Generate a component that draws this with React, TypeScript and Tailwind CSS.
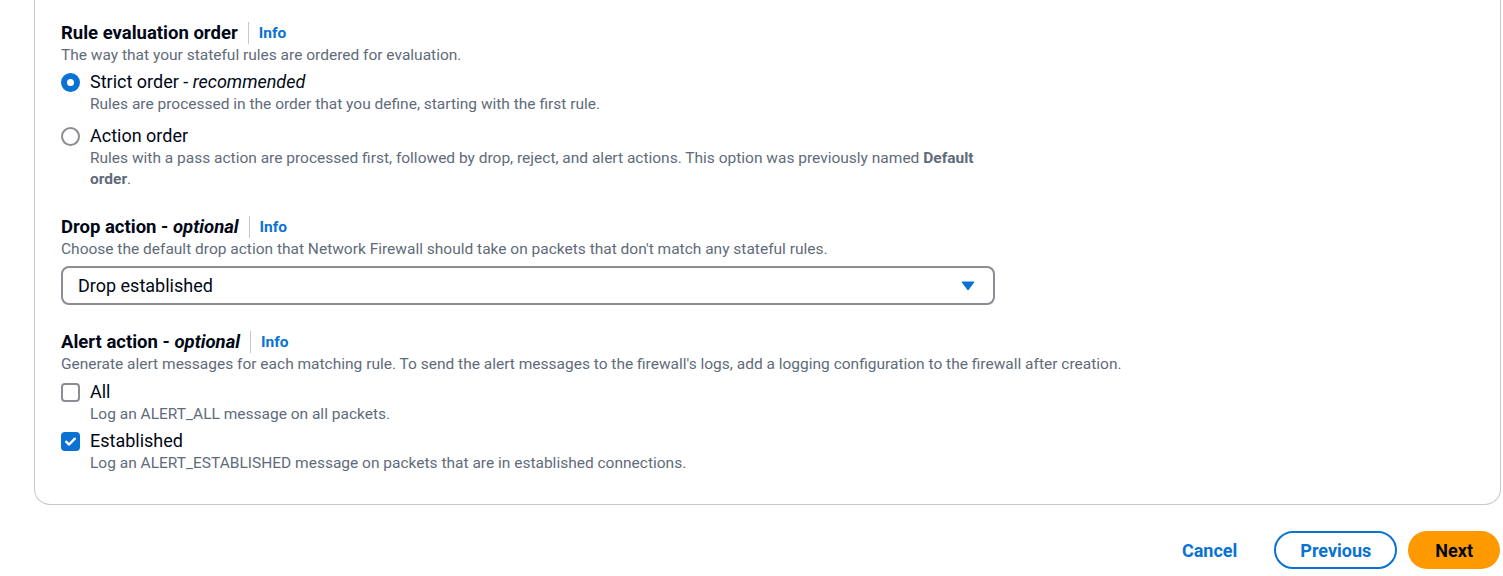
import React from "react";

function Label({ title, optional }: { title: string; optional?: boolean }) {
  return (
    <div className="flex h-[24px] items-center">
      <span className="text-[18.5px] leading-[24px] font-bold text-[#000716]">
        {title}
        {optional && (
          <>
            {" - "}
            <i>optional</i>
          </>
        )}
      </span>
      <span className="mx-[10px] h-[22px] w-px bg-[#c6c6cd]" />
      <a className="cursor-pointer text-[15.5px] leading-[24px] font-bold text-[#0972d3]">Info</a>
    </div>
  );
}

function Desc({ children }: { children: React.ReactNode }) {
  return <p className="text-[15.5px] leading-[21px] text-[#5f6b7a]">{children}</p>;
}

function Radio({ checked }: { checked?: boolean }) {
  return checked ? (
    <span className="mt-[3px] block h-[19px] w-[19px] shrink-0 rounded-full border-[6px] border-[#0972d3] bg-white" />
  ) : (
    <span className="mt-[3px] block h-[19px] w-[19px] shrink-0 rounded-full border-2 border-[#8c8c94] bg-white" />
  );
}

function Checkbox({ checked }: { checked?: boolean }) {
  return checked ? (
    <span className="mt-[3px] flex h-[19px] w-[19px] shrink-0 items-center justify-center rounded-[4px] bg-[#0972d3]">
      <svg width="13" height="13" viewBox="0 0 12 12" fill="none">
        <path d="M2 6.2l2.7 2.6L10 3.4" stroke="white" strokeWidth="2.2" strokeLinecap="round" strokeLinejoin="round" />
      </svg>
    </span>
  ) : (
    <span className="mt-[3px] block h-[19px] w-[19px] shrink-0 rounded-[4px] border-2 border-[#8c8c94] bg-white" />
  );
}

function Option({
  control,
  label,
  children,
}: {
  control: React.ReactNode;
  label: React.ReactNode;
  children: React.ReactNode;
}) {
  return (
    <div className="flex gap-[10px]">
      {control}
      <div className="max-w-[905px]">
        <div className="text-[18px] leading-[24px] text-[#000716]">{label}</div>
        <Desc>{children}</Desc>
      </div>
    </div>
  );
}

export default function App() {
  return (
    <div className="min-h-screen bg-white font-[Roboto,Arial,sans-serif]">
      <div className="ml-[34px] mr-[2px] rounded-b-[16px] border-x border-b border-[#c6c6cd] px-[26px] pt-[21px] pb-[30px]">
        <section>
          <Label title="Rule evaluation order" />
          <Desc>The way that your stateful rules are ordered for evaluation.</Desc>
          <div className="mt-[4px] flex flex-col gap-[9px]">
            <Option
              control={<Radio checked />}
              label={
                <>
                  Strict order - <i>recommended</i>
                </>
              }
            >
              Rules are processed in the order that you define, starting with the first rule.
            </Option>
            <Option control={<Radio />} label="Action order">
              Rules with a pass action are processed first, followed by drop, reject, and alert actions. This option was
              previously named <b>Default order</b>.
            </Option>
          </div>
        </section>

        <section className="mt-[25px]">
          <Label title="Drop action" optional />
          <Desc>Choose the default drop action that Network Firewall should take on packets that don't match any stateful rules.</Desc>
          <button className="mt-[6px] flex h-[39px] w-[934px] items-center justify-between rounded-[8px] border-2 border-[#8c8c94] bg-white pl-[15px] pr-[18px] text-left">
            <span className="text-[18px] text-[#000716]">Drop established</span>
            <svg width="14" height="10" viewBox="0 0 14 10">
              <path d="M1 1h12L7 9z" fill="#0972d3" stroke="#0972d3" strokeWidth="1" strokeLinejoin="round" />
            </svg>
          </button>
        </section>

        <section className="mt-[25px]">
          <Label title="Alert action" optional />
          <Desc>
            Generate alert messages for each matching rule. To send the alert messages to the firewall's logs, add a logging
            configuration to the firewall after creation.
          </Desc>
          <div className="mt-[5px] flex flex-col gap-[4px]">
            <Option control={<Checkbox />} label="All">
              Log an ALERT_ALL message on all packets.
            </Option>
            <Option control={<Checkbox checked />} label="Established">
              Log an ALERT_ESTABLISHED message on packets that are in established connections.
            </Option>
          </div>
        </section>
      </div>

      <div className="mr-[3px] mt-[26px] flex items-center justify-end">
        <button className="h-[38px] px-[20px] text-[18px] font-bold text-[#0972d3]">Cancel</button>
        <button className="ml-[17px] h-[38px] rounded-full border-2 border-[#0972d3] px-[24px] text-[18px] font-bold text-[#0972d3]">
          Previous
        </button>
        <button className="ml-[11px] h-[38px] rounded-full bg-[#ff9900] px-[27px] text-[18px] font-bold text-[#000716]">Next</button>
      </div>
    </div>
  );
}
